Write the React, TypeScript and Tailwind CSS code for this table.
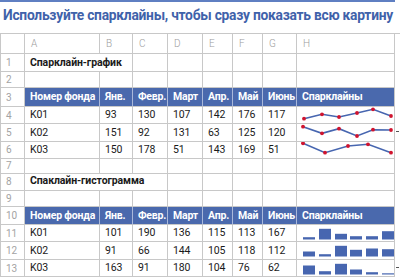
import React from 'react';

type Cell = { text?: string; span?: string; bold?: boolean };

const COLS = 'grid grid-cols-[25px_75px_33px_35px_35px_30px_30px_34px_98px_5px]';
const font = { fontFamily: 'Roboto, "Noto Sans", sans-serif' };

const lines: Record<number, [number, number][]> = {
  4: [[7, 11.7], [25, 7.3], [42, 10], [60, 6], [76, 2.3], [94, 9]],
  5: [[6, 2.7], [25, 9.3], [42, 4.7], [60, 12], [76, 5.7], [94, 6]],
  6: [[6, 1.3], [28, 10.7], [51, 4], [71, 2.3], [94, 10.7]],
};

const bars: Record<number, number[]> = {
  11: [2.3, 10.7, 5.7, 3.3, 3.3, 8.3],
  12: [5, 2.3, 10.7, 6.7, 8, 7.3],
  13: [9, 3.3, 10.7, 5, 2.3, 1.2],
};

const Sparkline = ({ row, h }: { row: number; h: number }) => {
  const pts = lines[row];
  return (
    <svg width="98" height={h} className="block">
      <polyline
        points={pts.map(p => p.join(',')).join(' ')}
        fill="none"
        stroke="#4766b0"
        strokeWidth="1.6"
      />
      {pts.map(([x, y], i) => (
        <circle key={i} cx={x} cy={y} r="1.9" fill="#d0142e" />
      ))}
    </svg>
  );
};

const Bars = ({ row, h }: { row: number; h: number }) => {
  const xs = [6, 22, 38, 53, 69, 85];
  return (
    <svg width="98" height={h} className="block">
      {bars[row].map((bh, i) => (
        <rect key={i} x={xs[i]} y={14.5 - bh} width="12" height={bh} fill="#4766b0" />
      ))}
    </svg>
  );
};

const headerCells = ['Номер фонда', 'Янв.', 'Февр.', 'Март', 'Апр.', 'Май', 'Июнь', 'Спарклайны'];

function BlueRow({ n, h }: { n: number; h: string }) {
  return (
    <div className={`${COLS} ${h}`}>
      <div className="border-l border-r border-b border-[#c8c8c8] flex items-center pl-[5px] text-[10px] text-[#a3a3a3]">{n}</div>
      {headerCells.map((t, i) => (
        <div
          key={i}
          className={`bg-[#4a69ad] border-b border-[#c8c8c8] flex items-center pl-[5px] text-[10.5px] font-bold text-white tracking-[-0.2px] whitespace-nowrap overflow-hidden ${i < 7 ? 'border-r border-r-[#a9b8da]' : 'border-r border-r-[#c8c8c8]'}`}
        >
          {t}
        </div>
      ))}
      <div />
    </div>
  );
}

function DataRow({ n, h, cells, extra, tick }: { n: number; h: string; cells: Cell[]; extra?: React.ReactNode; tick?: boolean }) {
  return (
    <div className={`${COLS} ${h}`}>
      <div className="border-l border-r border-b border-[#c8c8c8] flex items-center pl-[5px] text-[10px] text-[#a3a3a3]">{n}</div>
      {cells.map((c, i) => (
        <div
          key={i}
          className={`border-r border-b border-[#c8c8c8] flex items-center pl-[5px] text-[10.5px] tracking-[-0.1px] text-[#1a1a1a] whitespace-nowrap ${c.span ?? ''} ${c.bold ? 'font-bold' : ''}`}
        >
          {c.text}
        </div>
      ))}
      <div className="border-r border-b border-[#c8c8c8] flex items-start overflow-hidden">{extra}</div>
      <div className="flex items-center">
        {tick && <div className="w-[3px] h-px bg-[#555] ml-[1px] -mt-[3px]" />}
      </div>
    </div>
  );
}

const empty = (k: number): Cell[] => Array.from({ length: k }, () => ({}));
const vals = (a: string[]): Cell[] => a.map(t => ({ text: t }));

export default function App() {
  return (
    <div className="w-[400px] h-[278px] bg-white overflow-hidden" style={font}>
      <div className="w-[395px] h-[2px] bg-[#5f7fc2]" />
      <div className="h-[31px] pl-[3px] pt-[5px] text-[13.8px] leading-[17px] font-bold text-[#3f62aa] tracking-[-0.25px] whitespace-nowrap">
        Используйте спарклайны, чтобы сразу показать всю картину
      </div>

      <div className="border-t border-[#c8c8c8]">
        {/* column letters */}
        <div className={`${COLS} h-[20px]`}>
          <div className="border-l border-r border-b border-[#c8c8c8]" />
          {['A', 'B', 'C', 'D', 'E', 'F', 'G', 'H'].map(l => (
            <div key={l} className="border-r border-b border-[#c8c8c8] flex items-center pl-[6px] text-[10px] font-light text-[#9c9c9c]">{l}</div>
          ))}
          <div />
        </div>

        <DataRow n={1} h="h-[18px]" cells={[{ text: 'Спарклайн-график', bold: true, span: 'col-span-2' }, ...empty(5)]} />
        <DataRow n={2} h="h-[16px]" cells={empty(7)} />
        <BlueRow n={3} h="h-[19px]" />
        <DataRow n={4} h="h-[17px]" cells={vals(['K01', '93', '130', '107', '142', '176', '117'])} extra={<Sparkline row={4} h={17} />} />
        <DataRow n={5} h="h-[18px]" tick cells={vals(['K02', '151', '92', '131', '63', '125', '120'])} extra={<Sparkline row={5} h={18} />} />
        <DataRow n={6} h="h-[16px]" cells={vals(['K03', '150', '178', '51', '143', '169', '51'])} extra={<Sparkline row={6} h={16} />} />
        <DataRow n={7} h="h-[14px]" cells={empty(7)} />
        <DataRow n={8} h="h-[19px]" cells={[{ text: 'Спаклайн-гистограмма', bold: true, span: 'col-span-3' }, ...empty(4)]} />
        <DataRow n={9} h="h-[16px]" cells={empty(7)} />
        <BlueRow n={10} h="h-[18px]" />
        <DataRow n={11} h="h-[17px]" cells={vals(['K01', '101', '190', '136', '115', '113', '167'])} extra={<Bars row={11} h={17} />} />
        <DataRow n={12} h="h-[18px]" cells={vals(['K02', '91', '66', '144', '105', '118', '112'])} extra={<Bars row={12} h={18} />} />
        <DataRow n={13} h="h-[17px]" tick cells={vals(['K03', '163', '91', '180', '104', '76', '62'])} extra={<Bars row={13} h={17} />} />
      </div>
    </div>
  );
}
